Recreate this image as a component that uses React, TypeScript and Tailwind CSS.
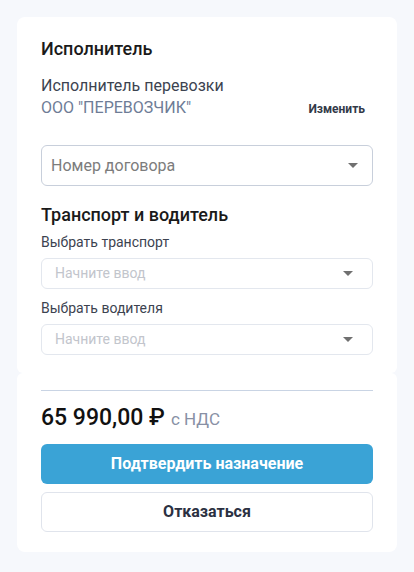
export default function App() {
  return (
    <div className="min-h-screen bg-[#f6f8fc] px-[17px] pt-[17px] font-['Roboto',sans-serif]">
      {/* Executor + transport card */}
      <div className="bg-white rounded-t-lg rounded-b-md px-6 pt-[21px] pb-[18px]">
        <h2 className="text-[18px] leading-[22px] font-medium text-[#1a1a1a]">Исполнитель</h2>
        <div className="mt-[15px] text-[16px] leading-[22px] text-[#3c4350]">Исполнитель перевозки</div>
        <div className="flex items-center justify-between">
          <span className="text-[16px] leading-[22px] text-[#6e7c96]">ООО "ПЕРЕВОЗЧИК"</span>
          <button className="text-[12px] font-bold text-[#333a48] mr-2 mt-[2px]">Изменить</button>
        </div>

        <div className="mt-[26px] h-[41px] border border-[#c8cfdb] rounded-md flex items-center justify-between pl-[9px] pr-[14px]">
          <span className="text-[16px] text-[#7c7c7c]">Номер договора</span>
          <Caret />
        </div>

        <h2 className="mt-[18px] text-[18px] leading-[22px] font-medium text-[#1a1a1a]">Транспорт и водитель</h2>
        <div className="mt-[6px] text-[14px] leading-[20px] text-[#3c4350]">Выбрать транспорт</div>
        <div className="mt-[6px] h-[31px] border border-[#e3e7ee] rounded-md flex items-center justify-between pl-[13px] pr-[19px]">
          <span className="text-[14px] text-[#c2c5cc]">Начните ввод</span>
          <Caret />
        </div>
        <div className="mt-[9px] text-[14px] leading-[20px] text-[#3c4350]">Выбрать водителя</div>
        <div className="mt-[6px] h-[31px] border border-[#e3e7ee] rounded-md flex items-center justify-between pl-[13px] pr-[19px]">
          <span className="text-[14px] text-[#c2c5cc]">Начните ввод</span>
          <Caret />
        </div>
      </div>

      {/* Price + actions card */}
      <div className="bg-white rounded-t-md rounded-b-lg px-6 pt-[17px] pb-[20px]">
        <div className="h-px bg-[#c9d4e4]" />
        <div className="mt-[13px] flex items-baseline gap-[6px]">
          <span className="text-[23px] leading-[28px] font-medium text-[#111]">65 990,00 ₽</span>
          <span className="text-[17px] text-[#8890a5]">с НДС</span>
        </div>
        <button className="mt-[11px] w-full h-[40px] rounded-md bg-[#3aa3d6] text-white text-[16px] font-bold">
          Подтвердить назначение
        </button>
        <button className="mt-[8px] w-full h-[40px] rounded-md border border-[#e0e4ec] bg-white text-[#2b3142] text-[16px] font-bold">
          Отказаться
        </button>
      </div>
    </div>
  );
}

function Caret() {
  return (
    <svg width="10" height="5" viewBox="0 0 10 5" className="shrink-0">
      <path d="M0 0h10L5 5z" fill="#707070" />
    </svg>
  );
}
